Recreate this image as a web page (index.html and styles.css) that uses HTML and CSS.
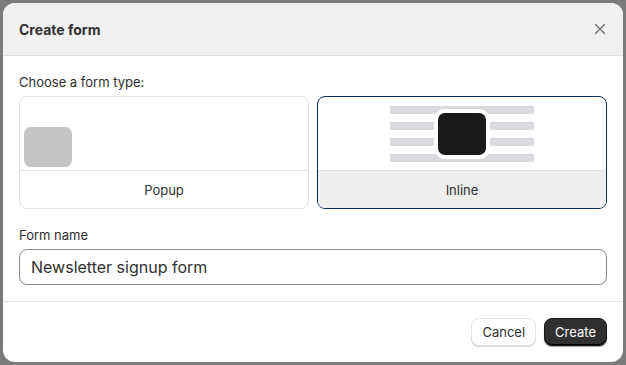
FILE: index.html
```html
<!DOCTYPE html>
<html lang="en">
<head>
  <meta charset="UTF-8" />
  <meta name="viewport" content="width=device-width, initial-scale=1.0" />
  <title>Create form</title>
  <link rel="stylesheet" href="styles.css">
</head>
<body>
  <div class="modal">
    <div class="modal-header">
      <h2>Create form</h2>
      <button class="close" aria-label="Close">
        <svg width="14" height="14" viewBox="0 0 14 14"><path d="M2.5 2.5 L11.5 11.5 M11.5 2.5 L2.5 11.5" stroke="#6b6b6b" stroke-width="1.3" stroke-linecap="round"/></svg>
      </button>
    </div>
    <div class="modal-body">
      <div class="label">Choose a form type:</div>
      <div class="types">
        <div class="type-card">
          <div class="type-image popup-image">
            <div class="popup-box"></div>
          </div>
          <div class="type-label">Popup</div>
        </div>
        <div class="type-card selected">
          <div class="type-image inline-image">
            <div class="inline-lines">
              <div class="line"></div>
              <div class="line"></div>
              <div class="line"></div>
              <div class="line"></div>
              <div class="inline-box"></div>
            </div>
          </div>
          <div class="type-label">Inline</div>
        </div>
      </div>
      <div class="label name-label">Form name</div>
      <input class="name-input" type="text" value="Newsletter signup form">
    </div>
    <div class="modal-footer">
      <button class="btn">Cancel</button>
      <button class="btn primary">Create</button>
    </div>
  </div>
</body>
</html>
```
FILE: styles.css
```css
* {
  box-sizing: border-box;
  font-family: Inter, 'Noto Sans', sans-serif;
}
body {
  margin: 0;
  padding: 3px;
  background: #7b7b7b;
  height: 100vh;
  overflow: hidden;
}
.modal {
  width: 620px;
  height: 359px;
  background: #fff;
  border-radius: 12px;
  overflow: hidden;
  display: flex;
  flex-direction: column;
}
.modal-header {
  height: 53px;
  background: #f1f1f1;
  border-bottom: 1px solid #e1e1e1;
  display: flex;
  align-items: center;
  justify-content: space-between;
  padding: 0 16px;
}
.modal-header h2 {
  margin: 0;
  font-size: 14px;
  font-weight: 650;
  color: #303030;
}
.close {
  background: none;
  border: none;
  padding: 0;
  width: 20px;
  height: 20px;
  display: flex;
  align-items: center;
  justify-content: center;
  margin-right: -3px;
  cursor: pointer;
}
.modal-body {
  padding: 16px 16px 16px;
  border-bottom: 1px solid #e3e3e3;
}
.label {
  font-size: 13px;
  line-height: 20px;
  color: #303030;
  margin-bottom: 4px;
}
.name-label {
  margin-top: 16px;
  margin-bottom: 4px;
}
.types {
  display: grid;
  grid-template-columns: 1fr 1fr;
  gap: 8px;
}
.type-card {
  border: 1px solid #e3e3e3;
  border-radius: 8px;
  overflow: hidden;
  height: 113px;
  display: flex;
  flex-direction: column;
  cursor: pointer;
}
.type-card.selected {
  border-color: #0b2e63;
}
.type-image {
  height: 74px;
  border-bottom: 1px solid #e3e3e3;
  display: flex;
}
.popup-image {
  align-items: flex-end;
  padding: 0 0 3px 4px;
}
.popup-box {
  width: 48px;
  height: 40px;
  background: #c4c4c4;
  border-radius: 7px;
}
.inline-image {
  align-items: center;
  justify-content: center;
}
.inline-lines {
  position: relative;
  width: 144px;
  display: flex;
  flex-direction: column;
  gap: 8px;
}
.line {
  height: 8px;
  background: #d9dadd;
}
.inline-box {
  position: absolute;
  left: 44px;
  top: 3px;
  width: 56px;
  height: 50px;
  background: #1a1a1a;
  border: 4px solid #fff;
  border-radius: 11px;
}
.type-label {
  flex: 1;
  display: flex;
  align-items: center;
  justify-content: center;
  font-size: 13px;
  color: #303030;
}
.selected .type-label {
  background: #efefef;
}
.name-input {
  width: 100%;
  height: 36px;
  border: 1px solid #8a8a8a;
  border-radius: 8px;
  padding: 0 11px;
  font-size: 16px;
  color: #303030;
  outline: none;
}
.modal-footer {
  flex: 1;
  display: flex;
  justify-content: flex-end;
  align-items: center;
  gap: 8px;
  padding: 0 16px;
}
.btn {
  height: 28px;
  padding: 0 10px;
  border-radius: 8px;
  border: 1px solid #e3e3e3;
  background: #fff;
  font-size: 13px;
  color: #303030;
  box-shadow: 0 1px 0 #d4d4d4;
  cursor: pointer;
}
.btn.primary {
  background: #303030;
  border-color: #1a1a1a;
  color: #fff;
  box-shadow: inset 0 -1px 0 #000, 0 1px 1px rgba(0,0,0,0.4);
}
```
